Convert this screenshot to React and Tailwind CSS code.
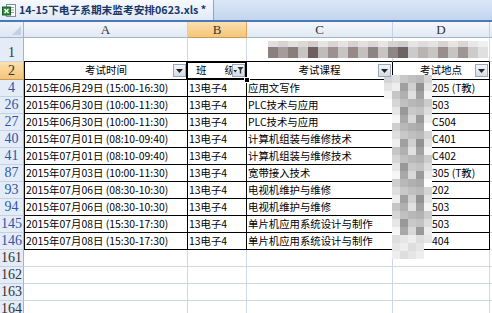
import React from "react";

const rows = [
  { n: "4", a: "2015年06月29日 (15:00-16:30)", c: "应用文写作", d: "205 (T教)" },
  { n: "26", a: "2015年06月30日 (10:00-11:30)", c: "PLC技术与应用", d: "503" },
  { n: "27", a: "2015年06月30日 (10:00-11:30)", c: "PLC技术与应用", d: "C504" },
  { n: "40", a: "2015年07月01日 (08:10-09:40)", c: "计算机组装与维修技术", d: "C401" },
  { n: "41", a: "2015年07月01日 (08:10-09:40)", c: "计算机组装与维修技术", d: "C402" },
  { n: "87", a: "2015年07月03日 (10:00-11:30)", c: "宽带接入技术", d: "305 (T教)" },
  { n: "93", a: "2015年07月06日 (08:30-10:30)", c: "电视机维护与维修", d: "202" },
  { n: "94", a: "2015年07月06日 (08:30-10:30)", c: "电视机维护与维修", d: "503" },
  { n: "145", a: "2015年07月08日 (15:30-17:30)", c: "单片机应用系统设计与制作", d: "503" },
  { n: "146", a: "2015年07月08日 (15:30-17:30)", c: "单片机应用系统设计与制作", d: "404" },
];

const emptyRows = ["161", "162", "163", "164"];

function gray(v) {
  const x = Math.max(0, Math.min(255, Math.round(v)));
  const h = x.toString(16).padStart(2, "0");
  return `#${h}${h}${h}`;
}

function ExcelIcon() {
  return (
    <svg width="15" height="15" viewBox="0 0 15 15">
      <rect x="4.5" y="1.5" width="9" height="12" fill="#fff" stroke="#7d8fa8" />
      <line x1="7" y1="4.5" x2="12" y2="4.5" stroke="#8fb08f" />
      <line x1="7" y1="7" x2="12" y2="7" stroke="#8fb08f" />
      <line x1="7" y1="9.5" x2="12" y2="9.5" stroke="#8fb08f" />
      <rect x="0.5" y="4" width="8" height="8" fill="#2f8a3c" stroke="#1d5e27" />
      <path d="M2.5 6 L6.5 10 M6.5 6 L2.5 10" stroke="#fff" strokeWidth="1.4" />
    </svg>
  );
}

function DropBtn({ filtered }) {
  return (
    <div className="absolute right-[1px] top-[2px] z-20 flex h-[13px] w-[13px] items-center justify-center border border-[#9aa8bc] bg-gradient-to-b from-[#f4f6f9] to-[#d5dbe4]">
      {filtered ? (
        <svg width="11" height="9" viewBox="0 0 11 9">
          <path d="M0.5 4 L4 4 L2.25 6.5 Z" fill="#222" />
          <path d="M4.5 1 L10.5 1 L8.2 4 L8.2 8 L6.8 7 L6.8 4 Z" fill="#333" />
        </svg>
      ) : (
        <svg width="7" height="4" viewBox="0 0 7 4">
          <path d="M0 0 H7 L3.5 4 Z" fill="#222" />
        </svg>
      )}
    </div>
  );
}

function RowMosaic() {
  const bottom = [
    "#8a8080", "#a89c9a", "#8a7e7c", "#c8c4c4", "#6e6060", "#c0bcbc", "#9c9090", "#c8c4c4",
    "#968a88", "#c4c0c0", "#8c8482", "#c8c4c4", "#8e8684", "#6e6464", "#cccaca", "#b8b4b4",
    "#c8c4c4", "#9a8e8c", "#c8c4c4", "#9e9694", "#cccaca", "#e0e0e0",
  ];
  const top = [
    "#e2dede", "#d8d2d2", "#e4e0e0", "#dcd8d8", "#d4cccc", "#e6e4e4", "#dad4d4", "#e4e2e2",
    "#d6d0d0", "#e2e0e0", "#dcd6d6", "#e6e4e4", "#d8d2d2", "#d0cccc", "#e6e6e6", "#dedcdc",
    "#e4e2e2", "#d8d4d4", "#e6e4e4", "#dad6d6", "#e8e8e8", "#f0f0f0",
  ];
  return (
    <svg className="absolute left-[268px] top-[41px] z-10" width="222" height="17" viewBox="0 0 222 17">
      {bottom.map((c, i) => (
        <rect key={"t" + i} x={i * 10} y="0" width="10" height="6" fill={top[i]} />
      ))}
      {bottom.map((c, i) => (
        <rect key={"b" + i} x={i * 10} y="6" width="10" height="11" fill={c} />
      ))}
    </svg>
  );
}

function Blob() {
  const base = [236, 222, 176, 200, 170, 228];
  const cells = [];
  for (let r = 0; r < 23; r++) {
    for (let c = 0; c < 6; c++) {
      if (r >= 4 && c === 0) continue;
      if (r >= 21 && (c === 5 || c === 0)) continue;
      let v = base[c] + (((r * 37 + c * 17) % 7) - 3) * 8;
      if (r >= 20) v = 222 + ((r + c) % 3) * 8;
      cells.push(<rect key={r + "-" + c} x={c * 8} y={r * 8} width="8" height="8" fill={gray(v)} />);
    }
  }
  return (
    <svg className="absolute left-[384px] top-[75px] z-10" width="48" height="184" viewBox="0 0 48 184">
      {cells}
    </svg>
  );
}

export default function App() {
  return (
    <div className="relative h-[313px] w-[492px] overflow-hidden bg-white font-['Noto_Sans_CJK_SC',sans-serif] text-black">
      {/* tab bar */}
      <div className="flex h-[20px] bg-gradient-to-b from-[#dbe7f7] to-[#c2d5ee]">
        <div className="flex w-[214px] items-center gap-[2px] border-r border-[#8aa6cc] bg-gradient-to-b from-[#f6f9fd] to-[#e0eaf7] pl-[2px]">
          <ExcelIcon />
          <span className="whitespace-nowrap text-[10.7px] font-bold leading-none text-[#1b3766]">
            14-15下电子系期末监考安排0623.xls *
          </span>
        </div>
      </div>
      <div className="h-[2px] bg-[#4a78b8]" />

      {/* column headers */}
      <div className="flex h-[16px] font-['Liberation_Serif',serif] text-[13px] leading-none text-[#333]">
        <div className="relative w-[24px] border-r border-b border-[#9eb6ce] bg-gradient-to-b from-[#eef3fa] to-[#dde6f2]">
          <svg className="absolute right-[2px] bottom-[2px]" width="9" height="9" viewBox="0 0 9 9">
            <path d="M9 0 V9 H0 Z" fill="#c3d0e2" />
          </svg>
        </div>
        <div className="flex w-[164px] items-center justify-center border-r border-b border-r-[#c5d2e3] border-b-[#9eb6ce] bg-gradient-to-b from-[#f4f7fb] to-[#e2e9f3]">A</div>
        <div className="flex w-[59px] items-center justify-center border-r border-b border-r-[#e1a55a] border-b-[#c89a5a] bg-gradient-to-b from-[#fbe0ad] to-[#f4c577]">B</div>
        <div className="flex w-[146px] items-center justify-center border-r border-b border-r-[#c5d2e3] border-b-[#9eb6ce] bg-gradient-to-b from-[#f4f7fb] to-[#e2e9f3]">C</div>
        <div className="flex w-[97px] items-center justify-center border-r border-b border-r-[#c5d2e3] border-b-[#9eb6ce] bg-gradient-to-b from-[#f4f7fb] to-[#e2e9f3]">D</div>
        <div className="flex-1 border-b border-[#9eb6ce] bg-gradient-to-b from-[#f4f7fb] to-[#e2e9f3]" />
      </div>

      {/* row 1 */}
      <div className="flex h-[24px]">
        <div className="flex w-[24px] items-end justify-center border-r border-b border-r-[#9eb6ce] border-b-[#c5d2e3] bg-[#e4ecf7] pb-[1px] font-['Liberation_Serif',serif] text-[14px] leading-none text-[#333]">1</div>
        <div className="w-[164px] border-r border-b border-r-[#d0d7e5] border-b-black" />
        <div className="w-[59px] border-r border-b border-r-[#d0d7e5] border-b-black" />
        <div className="w-[146px] border-r border-b border-r-[#d0d7e5] border-b-black" />
        <div className="w-[97px] border-r border-b border-r-[#d0d7e5] border-b-black" />
        <div className="flex-1 border-b border-[#d0d7e5]" />
      </div>

      {/* row 2 : filter header */}
      <div className="flex h-[18px] text-[10.5px] leading-none">
        <div className="flex w-[24px] items-center justify-center border-r border-b border-r-[#9eb6ce] border-b-[#c89a5a] bg-gradient-to-b from-[#fbe0ad] to-[#f4c577] font-['Liberation_Serif',serif] text-[14px] text-[#333]">2</div>
        <div className="relative flex w-[164px] items-center justify-center border-x border-b border-black">
          考试时间
          <DropBtn />
        </div>
        <div className="relative flex w-[59px] items-center justify-between border-r border-b border-black pl-[8px] pr-[11px]">
          <span>班</span>
          <span>级</span>
          <DropBtn filtered />
          <div className="pointer-events-none absolute -left-[2px] -top-[1px] -right-[1px] -bottom-[1px] z-30 border-2 border-black" />
          <div className="absolute -right-[4px] -bottom-[4px] z-40 h-[6px] w-[6px] border border-white bg-black" />
        </div>
        <div className="relative flex w-[146px] items-center justify-center border-r border-b border-black">
          考试课程
          <DropBtn />
        </div>
        <div className="relative flex w-[97px] items-center justify-center border-r border-b border-black">
          考试地点
          <DropBtn />
        </div>
        <div className="flex-1 border-b border-[#d0d7e5]" />
      </div>

      {/* data rows */}
      {rows.map((r) => (
        <div key={r.n} className="flex h-[17px] text-[10.4px] leading-none">
          <div className="flex w-[24px] items-center justify-center border-r border-b border-r-[#9eb6ce] border-b-[#c5d2e3] bg-[#e4ecf7] font-['Liberation_Serif',serif] text-[14px] text-[#2f55a8]">{r.n}</div>
          <div className="flex w-[164px] items-center whitespace-nowrap border-x border-b border-black pl-[1px]">{r.a}</div>
          <div className="flex w-[59px] items-center whitespace-nowrap border-r border-b border-black pl-[1px]">13电子4</div>
          <div className="flex w-[146px] items-center whitespace-nowrap border-r border-b border-black pl-[1px]">{r.c}</div>
          <div className="flex w-[97px] items-center whitespace-nowrap border-r border-b border-black pl-[39px]">{r.d}</div>
          <div className="flex-1 border-b border-[#d0d7e5]" />
        </div>
      ))}

      {/* empty rows */}
      {emptyRows.map((n) => (
        <div key={n} className="flex h-[17px]">
          <div className="flex w-[24px] items-center justify-center border-r border-b border-r-[#9eb6ce] border-b-[#c5d2e3] bg-[#e4ecf7] font-['Liberation_Serif',serif] text-[14px] leading-none text-[#333]">{n}</div>
          <div className="w-[164px] border-r border-b border-[#d0d7e5]" />
          <div className="w-[59px] border-r border-b border-[#d0d7e5]" />
          <div className="w-[146px] border-r border-b border-[#d0d7e5]" />
          <div className="w-[97px] border-r border-b border-[#d0d7e5]" />
          <div className="flex-1 border-b border-[#d0d7e5]" />
        </div>
      ))}

      <RowMosaic />
      <Blob />
    </div>
  );
}
